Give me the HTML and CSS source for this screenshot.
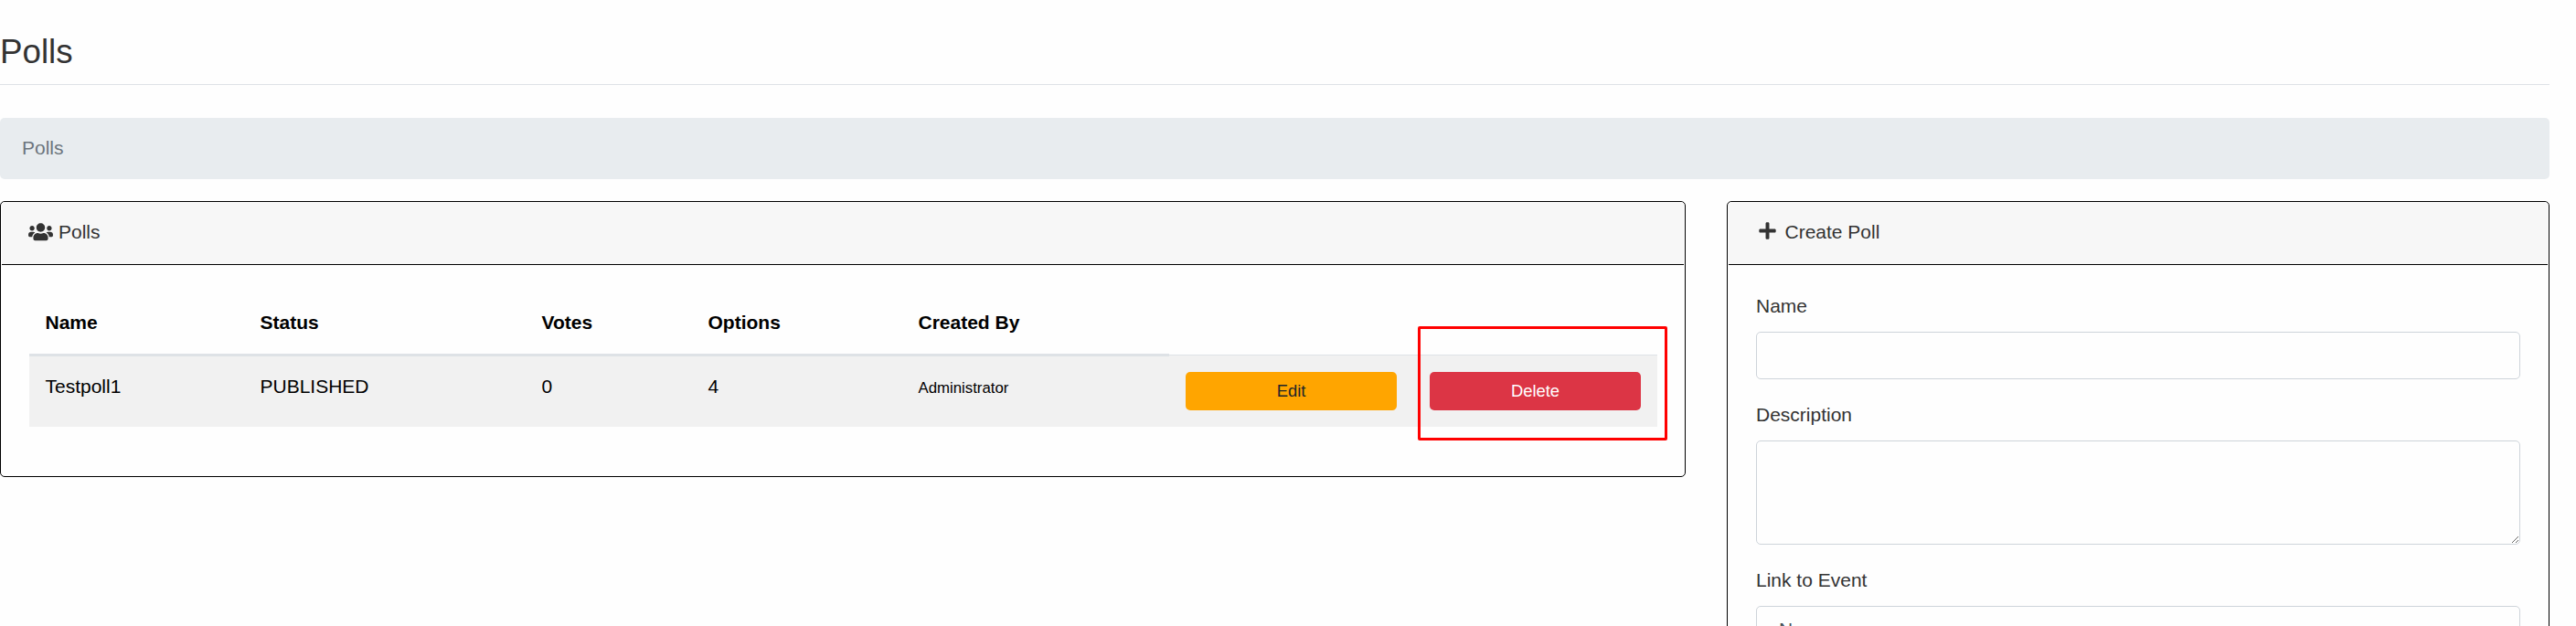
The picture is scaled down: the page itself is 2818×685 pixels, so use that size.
FILE: index.html
```html
<!DOCTYPE html>
<html lang="en">
<head>
<meta charset="utf-8">
<title>Polls</title>
<link rel="stylesheet" href="styles.css">
</head>
<body>
<main class="page">
  <h1 class="title">Polls</h1>
  <nav class="breadcrumb">Polls</nav>
  <div class="columns">
    <section class="card list-card">
      <header class="card-header">
        <svg class="icon-users" viewBox="0 0 640 512" fill="currentColor"><path d="M96 224c35.300 0 64-28.700 64-64s-28.700-64-64-64-64 28.700-64 64 28.700 64 64 64zm448 0c35.300 0 64-28.700 64-64s-28.700-64-64-64-64 28.700-64 64 28.700 64 64 64zm32 32h-64c-17.600 0-33.500 7.100-45.100 18.600 40.300 22.100 68.900 62 75.100 109.400h66c17.700 0 32-14.300 32-32v-32c0-35.300-28.700-64-64-64zm-256 0c61.900 0 112-50.100 112-112S381.900 32 320 32 208 82.100 208 144s50.100 112 112 112zm76.800 32h-8.300c-20.800 10-43.900 16-68.500 16s-47.600-6-68.500-16h-8.300C179.600 288 128 339.600 128 403.200V432c0 26.500 21.500 48 48 48h288c26.500 0 48-21.500 48-48v-28.800c0-63.600-51.600-115.200-115.200-115.200zm-223.700-13.400C161.500 263.100 145.600 256 128 256H64c-35.300 0-64 28.700-64 64v32c0 17.700 14.300 32 32 32h65.900c6.300-47.400 34.900-87.300 75.200-109.400z"/></svg>
        <span>Polls</span>
      </header>
      <div class="table-wrap">
        <table class="table">
          <colgroup><col class="c-name"><col class="c-status"><col class="c-votes"><col class="c-options"><col class="c-author"><col class="c-action"><col class="c-action"></colgroup>
          <thead>
            <tr><th>Name</th><th>Status</th><th>Votes</th><th>Options</th><th>Created By</th></tr>
          </thead>
          <tbody>
            <tr>
              <td>Testpoll1</td><td>PUBLISHED</td><td>0</td><td>4</td>
              <td><small>Administrator</small></td>
              <td class="action"><button class="btn btn-edit">Edit</button></td>
              <td class="action"><button class="btn btn-delete">Delete</button><div class="highlight"></div></td>
            </tr>
          </tbody>
        </table>
      </div>
    </section>
    <section class="card form-card">
      <header class="card-header">
        <svg class="icon-plus" viewBox="0 0 448 512" fill="currentColor"><path d="M416 208H272V64c0-17.670-14.330-32-32-32h-32c-17.670 0-32 14.330-32 32v144H32c-17.670 0-32 14.330-32 32v32c0 17.670 14.330 32 32 32h144v144c0 17.670 14.330 32 32 32h32c17.670 0 32-14.330 32-32V304h144c17.670 0 32-14.330 32-32v-32c0-17.670-14.330-32-32-32z"/></svg>
        <span>Create Poll</span>
      </header>
      <form class="form">
        <label for="name">Name</label>
        <input id="name" class="control" type="text">
        <label for="description">Description</label>
        <textarea id="description" class="control area"></textarea>
        <label for="event">Link to Event</label>
        <select id="event" class="control"><option>None</option></select>
      </form>
    </section>
  </div>
</main>
</body>
</html>
```

FILE: styles.css
```css
* { box-sizing: border-box; }
body {
  margin: 0;
  background: #fefefe;
  color: #333;
  font: 21px/32px "Liberation Sans", Arial, sans-serif;
}
.page { width: 2789px; height: 685px; overflow: hidden; }
.title {
  height: 93px;
  margin: 0 0 36px;
  padding-top: 35px;
  border-bottom: 1px solid #dee2e6;
  font-size: 36.750px;
  font-weight: 400;
  line-height: 44px;
}
.breadcrumb {
  height: 67px;
  margin-bottom: 24px;
  padding: 17px 24px;
  border-radius: 5px;
  background: #e8ecef;
  color: #6c757d;
}
.columns { display: flex; align-items: flex-start; gap: 45px; }
.card { border: 1px solid #000; border-radius: 5px; background: #fefefe; }
.list-card { width: 1844px; height: 302px; }
.form-card { width: 900px; height: 600px; }
.card-header {
  display: flex;
  align-items: center;
  height: 69px;
  margin: 0 1px;
  padding: 0 30px 3px 29px;
  border-bottom: 1px solid #000;
  border-radius: 4px 4px 0 0;
  background: #f7f7f7;
}
.icon-users { width: 27px; height: 21.500px; margin-right: 6px; }
.icon-plus { width: 19px; height: 21px; margin: 0 9.500px 2px 4px; }
.table-wrap { padding: 30px 30px 0 31px; }
.table {
  width: 1781px;
  table-layout: fixed;
  border-collapse: collapse;
  color: #000;
}
.c-name { width: 235px; }
.c-status { width: 308px; }
.c-votes { width: 182px; }
.c-options { width: 230px; }
.c-author { width: 292px; }
.c-action { width: 267px; }
.table th {
  height: 68px;
  padding: 0 17.500px;
  border-bottom: 3px solid #dee2e6;
  text-align: left;
}
.table td {
  height: 79px;
  padding: 17px 17.500px 0;
  border-top: 1px solid #dee2e6;
  background: #f1f1f1;
  vertical-align: top;
}
.table small { font-size: 16.800px; }
.table .action { position: relative; padding: 18px 18px 0; }
.btn {
  display: block;
  width: 231px;
  height: 42px;
  padding: 0;
  border: 0;
  border-radius: 5px;
  font: 18.400px/42px "Liberation Sans", Arial, sans-serif;
}
.btn-edit { background: #ffa500; color: #212529; }
.btn-delete { background: #dc3545; color: #fff; }
.highlight {
  position: absolute;
  top: -32px;
  left: 5px;
  width: 273px;
  height: 125px;
  border: 3px solid #f00;
  border-radius: 2px;
}
.form { display: flex; flex-direction: column; padding: 29px 31px; }
.form label { height: 32px; margin-bottom: 12px; }
.control {
  width: 836px;
  height: 52px;
  margin: 0 0 23px;
  padding: 8px 24px;
  border: 1px solid #ced4da;
  border-radius: 5px;
  background: #fefefe;
  color: #495057;
  font: inherit;
  appearance: none;
}
.area { height: 114px; resize: vertical; }
```
